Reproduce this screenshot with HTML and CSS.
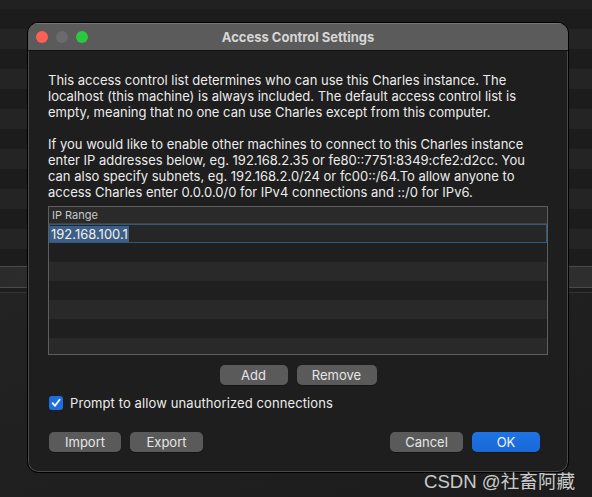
FILE: index.html
```html
<!DOCTYPE html>
<html>
<head>
<meta charset="utf-8">
<link rel="stylesheet" href="styles.css">
</head>
<body>
<div class="desktop">
  <div class="bg-row bg-top"></div>
  <div class="bg-stripes"></div>
  <div class="bg-line"></div>
  <div class="bg-toolbar"></div>
  <div class="bg-line"></div>
  <div class="bg-gap"></div>
  <div class="bg-line dim"></div>
  <div class="bg-bottom"></div>
</div>

<div class="window">
  <div class="titlebar">
    <div class="lights">
      <span class="light red"></span>
      <span class="light gray"></span>
      <span class="light green"></span>
    </div>
    <div class="title">Access Control Settings</div>
  </div>
  <div class="content">
    <p class="para">This access control list determines who can use this Charles instance. The<br>localhost (this machine) is always included. The default access control list is<br>empty, meaning that no one can use Charles except from this computer.</p>
    <p class="para">If you would like to enable other machines to connect to this Charles instance<br>enter IP addresses below, eg. 192.168.2.35 or fe80::7751:8349:cfe2:d2cc. You<br>can also specify subnets, eg. 192.168.2.0/24 or fc00::/64.To allow anyone to<br>access Charles enter 0.0.0.0/0 for IPv4 connections and ::/0 for IPv6.</p>
    <div class="table">
      <div class="thead">IP Range</div>
      <div class="edit-row"><span class="sel">192.168.100.1</span></div>
      <div class="row"></div>
      <div class="row alt"></div>
      <div class="row"></div>
      <div class="row alt"></div>
      <div class="row"></div>
      <div class="row alt last"></div>
    </div>
    <div class="mid-buttons">
      <button class="btn w-add">Add</button>
      <button class="btn w-remove">Remove</button>
    </div>
    <label class="check-row">
      <span class="checkbox">
        <svg width="10" height="10" viewBox="0 0 10 10"><path d="M1.6 5.2 L4 7.8 L8.6 1.8" fill="none" stroke="#fff" stroke-width="1.8" stroke-linecap="round" stroke-linejoin="round"/></svg>
      </span>
      <span class="check-label">Prompt to allow unauthorized connections</span>
    </label>
    <div class="footer">
      <div class="group">
        <button class="btn w-import">Import</button>
        <button class="btn w-export">Export</button>
      </div>
      <div class="group">
        <button class="btn w-cancel">Cancel</button>
        <button class="btn primary w-ok">OK</button>
      </div>
    </div>
  </div>
</div>

<div class="watermark">CSDN @社畜阿藏</div>
</body>
</html>
```

FILE: styles.css
```css
html, body {
  margin: 0;
  padding: 0;
}
body {
  width: 592px;
  height: 497px;
  overflow: hidden;
  position: relative;
  background: #1f1f1f;
  font-family: Inter, "Liberation Sans", sans-serif;
}

/* background app */
.desktop {
  display: flex;
  flex-direction: column;
  height: 497px;
}
.bg-top { height: 9px; background: #212121; flex: none; }
.bg-stripes {
  height: 257px;
  flex: none;
  background: repeating-linear-gradient(to bottom, #1c1c1c 0, #1c1c1c 20px, #242424 20px, #242424 40px);
}
.bg-line { height: 1px; background: #4a4a4a; flex: none; }
.bg-line.dim { background: #363636; }
.bg-toolbar {
  height: 20px;
  flex: none;
  background: linear-gradient(to right, #2b2b2b, #333333 60%, #2e2e2e);
}
.bg-gap { height: 4px; background: #1d1d1d; flex: none; }
.bg-bottom {
  flex: 1;
  background: linear-gradient(to bottom right, #232323, #1c1c1c);
}

/* window */
.window {
  position: absolute;
  left: 27px;
  top: 22px;
  width: 540px;
  height: 449px;
  border: 1px solid #000;
  border-radius: 11px;
  background: #1e1e1e;
  box-shadow: inset 0 0 0 1px #4a4a4a;
  overflow: hidden;
  display: flex;
  flex-direction: column;
}
.titlebar {
  height: 28px;
  flex: none;
  background: #5b5b5b;
  border-bottom: 1px solid #111;
  box-sizing: border-box;
  display: flex;
  align-items: center;
  position: relative;
  box-shadow: inset 0 1px 0 #777;
}
.lights {
  display: flex;
  gap: 8px;
  padding-left: 8px;
}
.light {
  width: 12px;
  height: 12px;
  border-radius: 50%;
  display: block;
}
.red { background: #fe5f57; }
.gray { background: #6b6b6b; }
.green { background: #2bc840; }
.title {
  position: absolute;
  left: 0;
  right: 0;
  text-align: center;
  font-weight: 700;
  font-size: 13px;
  color: #d6d6d6;
  top: 6px;
}

.content {
  padding: 21px 19px 0 20px;
  display: flex;
  flex-direction: column;
  color: #ececec;
  font-size: 13px;
}
.para {
  margin: 0 0 16px 0;
  line-height: 16px;
  white-space: nowrap;
}
.para + .para { margin-bottom: 6px; }

.table {
  border: 1px solid #5e5e5e;
  width: 500px;
  box-sizing: border-box;
  display: flex;
  flex-direction: column;
}
.thead {
  height: 16px;
  line-height: 16px;
  font-size: 11px;
  color: #c8c8c8;
  padding-left: 3px;
  background: #2a2a2a;
  border-bottom: 1px solid #424242;
}
.edit-row {
  height: 19px;
  box-sizing: border-box;
  border: 1px solid #2b5a86;
  background: #262626;
  display: flex;
  align-items: center;
  padding-left: 0;
}
.sel {
  background: #3d5e86;
  color: #f0f0f0;
  font-size: 13px;
  line-height: 16px;
  padding: 0 1px;
}
.row { height: 19px; background: #1f1f1f; }
.row.alt { background: #292929; }
.row.last { height: 16px; }

.btn {
  font-family: inherit;
  font-size: 13px;
  color: #e6e6e6;
  background: #5a5a5a;
  border: none;
  border-radius: 5px;
  height: 20px;
  padding: 0;
  line-height: 20px;
  box-shadow: 0 1px 0 rgba(0,0,0,0.3);
}
.btn.primary {
  background: linear-gradient(to bottom, #1d74e6, #1a68d6);
  color: #f4f4f4;
}
.w-add { width: 68px; }
.w-remove { width: 80px; }
.w-import { width: 72px; }
.w-export { width: 73px; }
.w-cancel { width: 73px; }
.w-ok { width: 68px; }

.mid-buttons {
  display: flex;
  justify-content: center;
  gap: 9px;
  margin-top: 10px;
  width: 500px;
}
.check-row {
  display: flex;
  align-items: center;
  margin-top: 11px;
  height: 14px;
  padding-left: 1px;
}
.checkbox {
  width: 14px;
  height: 14px;
  border-radius: 3px;
  background: #1d6fe0;
  display: flex;
  align-items: center;
  justify-content: center;
}
.check-label {
  margin-left: 7px;
  line-height: 16px;
  letter-spacing: 0.1px;
}
.footer {
  display: flex;
  justify-content: space-between;
  margin-top: 22px;
  padding-left: 1px;
  width: 491px;
}
.group {
  display: flex;
  gap: 9px;
}

.watermark {
  position: absolute;
  left: 424px;
  top: 466px;
  font-family: "Liberation Sans", "Noto Sans CJK SC", sans-serif;
  font-size: 18.6px;
  color: rgba(235,235,235,0.85);
  white-space: nowrap;
}
```
